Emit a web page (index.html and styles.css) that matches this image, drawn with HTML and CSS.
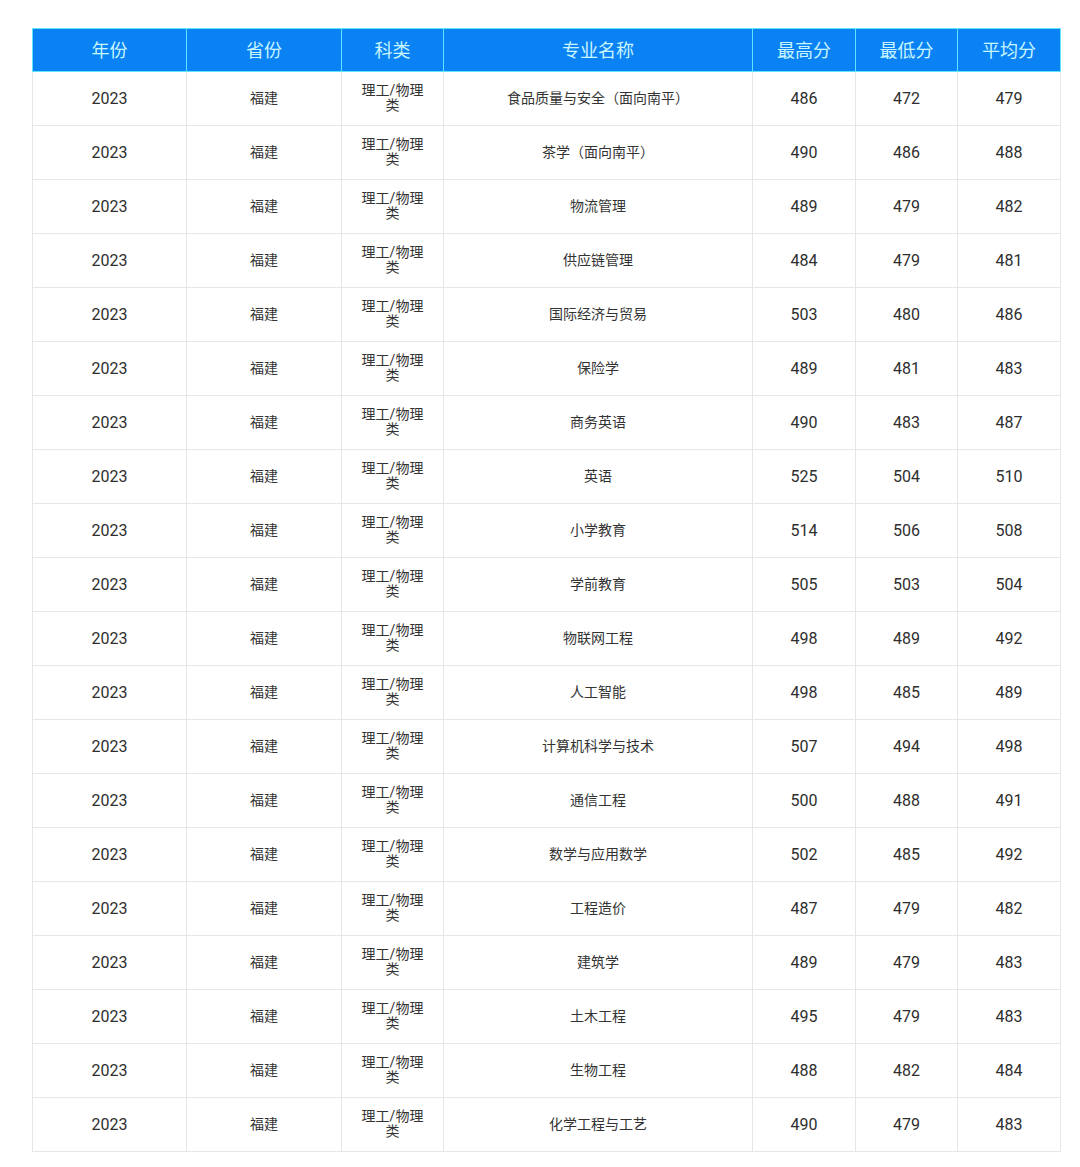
FILE: index.html
```html
<!DOCTYPE html>
<html lang="zh">
<head>
<meta charset="utf-8">
<link rel="stylesheet" href="styles.css">
</head>
<body>
<table class="scores">
  <colgroup>
    <col class="c-year"><col class="c-prov"><col class="c-type"><col class="c-major"><col class="c-num"><col class="c-num2"><col class="c-num">
  </colgroup>
  <thead>
    <tr><th>年份</th><th>省份</th><th>科类</th><th>专业名称</th><th>最高分</th><th>最低分</th><th>平均分</th></tr>
  </thead>
  <tbody>
    <tr><td class="num">2023</td><td class="cn">福建</td><td class="type">理工/物理类</td><td class="cn">食品质量与安全（面向南平）</td><td class="num">486</td><td class="num">472</td><td class="num">479</td></tr>
    <tr><td class="num">2023</td><td class="cn">福建</td><td class="type">理工/物理类</td><td class="cn">茶学（面向南平）</td><td class="num">490</td><td class="num">486</td><td class="num">488</td></tr>
    <tr><td class="num">2023</td><td class="cn">福建</td><td class="type">理工/物理类</td><td class="cn">物流管理</td><td class="num">489</td><td class="num">479</td><td class="num">482</td></tr>
    <tr><td class="num">2023</td><td class="cn">福建</td><td class="type">理工/物理类</td><td class="cn">供应链管理</td><td class="num">484</td><td class="num">479</td><td class="num">481</td></tr>
    <tr><td class="num">2023</td><td class="cn">福建</td><td class="type">理工/物理类</td><td class="cn">国际经济与贸易</td><td class="num">503</td><td class="num">480</td><td class="num">486</td></tr>
    <tr><td class="num">2023</td><td class="cn">福建</td><td class="type">理工/物理类</td><td class="cn">保险学</td><td class="num">489</td><td class="num">481</td><td class="num">483</td></tr>
    <tr><td class="num">2023</td><td class="cn">福建</td><td class="type">理工/物理类</td><td class="cn">商务英语</td><td class="num">490</td><td class="num">483</td><td class="num">487</td></tr>
    <tr><td class="num">2023</td><td class="cn">福建</td><td class="type">理工/物理类</td><td class="cn">英语</td><td class="num">525</td><td class="num">504</td><td class="num">510</td></tr>
    <tr><td class="num">2023</td><td class="cn">福建</td><td class="type">理工/物理类</td><td class="cn">小学教育</td><td class="num">514</td><td class="num">506</td><td class="num">508</td></tr>
    <tr><td class="num">2023</td><td class="cn">福建</td><td class="type">理工/物理类</td><td class="cn">学前教育</td><td class="num">505</td><td class="num">503</td><td class="num">504</td></tr>
    <tr><td class="num">2023</td><td class="cn">福建</td><td class="type">理工/物理类</td><td class="cn">物联网工程</td><td class="num">498</td><td class="num">489</td><td class="num">492</td></tr>
    <tr><td class="num">2023</td><td class="cn">福建</td><td class="type">理工/物理类</td><td class="cn">人工智能</td><td class="num">498</td><td class="num">485</td><td class="num">489</td></tr>
    <tr><td class="num">2023</td><td class="cn">福建</td><td class="type">理工/物理类</td><td class="cn">计算机科学与技术</td><td class="num">507</td><td class="num">494</td><td class="num">498</td></tr>
    <tr><td class="num">2023</td><td class="cn">福建</td><td class="type">理工/物理类</td><td class="cn">通信工程</td><td class="num">500</td><td class="num">488</td><td class="num">491</td></tr>
    <tr><td class="num">2023</td><td class="cn">福建</td><td class="type">理工/物理类</td><td class="cn">数学与应用数学</td><td class="num">502</td><td class="num">485</td><td class="num">492</td></tr>
    <tr><td class="num">2023</td><td class="cn">福建</td><td class="type">理工/物理类</td><td class="cn">工程造价</td><td class="num">487</td><td class="num">479</td><td class="num">482</td></tr>
    <tr><td class="num">2023</td><td class="cn">福建</td><td class="type">理工/物理类</td><td class="cn">建筑学</td><td class="num">489</td><td class="num">479</td><td class="num">483</td></tr>
    <tr><td class="num">2023</td><td class="cn">福建</td><td class="type">理工/物理类</td><td class="cn">土木工程</td><td class="num">495</td><td class="num">479</td><td class="num">483</td></tr>
    <tr><td class="num">2023</td><td class="cn">福建</td><td class="type">理工/物理类</td><td class="cn">生物工程</td><td class="num">488</td><td class="num">482</td><td class="num">484</td></tr>
    <tr><td class="num">2023</td><td class="cn">福建</td><td class="type">理工/物理类</td><td class="cn">化学工程与工艺</td><td class="num">490</td><td class="num">479</td><td class="num">483</td></tr>
  </tbody>
</table>
</body>
</html>
```

FILE: styles.css
```css
html, body {
  margin: 0;
  padding: 0;
  background: #ffffff;
}

body {
  font-family: Roboto, "Noto Sans CJK SC", "Noto Sans", sans-serif;
  color: #333333;
}

.scores {
  margin: 28px 0 0 32px;
  border-collapse: collapse;
  table-layout: fixed;
  width: 1029px;
}

.c-year { width: 154px; }
.c-prov { width: 155px; }
.c-type { width: 102px; }
.c-major { width: 309px; }
.c-num { width: 103px; }
.c-num2 { width: 102px; }

.scores th,
.scores td {
  box-sizing: border-box;
}

.scores th {
  height: 43px;
  padding: 0 0 3px;
  background: #0b82f4;
  border: 1px solid #5fe4ff;
  color: #c8f6ff;
  font-family: "Noto Sans CJK SC", sans-serif;
  font-size: 18px;
  line-height: 18px;
  font-weight: 400;
  text-align: center;
  vertical-align: middle;
}

.scores td {
  height: 54px;
  padding: 0;
  border: 1px solid #e4e7e9;
  text-align: center;
  vertical-align: middle;
}

.scores td.num {
  font-family: Roboto, sans-serif;
  font-size: 16px;
  color: #2e2e2e;
}

.scores td.cn {
  font-family: "Noto Sans CJK SC", sans-serif;
  font-size: 14px;
  line-height: 14px;
  padding-bottom: 3px;
  color: #333333;
}

.scores td.type {
  font-family: Roboto, "Noto Sans CJK SC", sans-serif;
  font-size: 14px;
  line-height: 15px;
  padding: 0 17px 2px;
  color: #333333;
}
```
